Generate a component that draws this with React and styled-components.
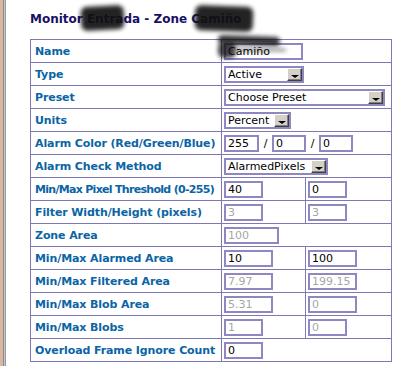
import React from "react";
import styled, { createGlobalStyle } from "styled-components";

const GlobalStyle = createGlobalStyle`
    html, body {
        margin: 0;
        padding: 0;
        background: #ffffff;
    }
    body {
        font-family: "DejaVu Sans", Verdana, sans-serif;
    }
`;

const Page = styled.div`
    display: flex;
    width: 402px;
    height: 366px;
    overflow: hidden;
    position: relative;
`;

const WindowEdge = styled.div`
    width: 7px;
    flex-shrink: 0;
    background: linear-gradient(
        to right,
        #d9b6a2 0px,
        #d9b6a2 3px,
        #8a8a8a 3px,
        #8a8a8a 4px,
        #c8c8c8 4px,
        #c8c8c8 5px,
        #9a9a9a 5px,
        #9a9a9a 6px,
        #ffffff 6px
    );
`;

const Content = styled.div`
    padding-left: 23px;
    padding-top: 11px;
`;

const Title = styled.h2`
    margin: 0;
    font-size: 12px;
    font-weight: bold;
    color: #1a0f66;
    line-height: 16px;
    height: 28px;
`;

const Grid = styled.table`
    border-collapse: collapse;
    width: 361px;
    border: 1px solid #7e78b6;
    table-layout: fixed;
`;

const Row = styled.tr`
    height: 23px;
`;

const Label = styled.td`
    border: 1px solid #7e78b6;
    padding: 0 0 0 4px;
    font-size: 11px;
    font-weight: bold;
    letter-spacing: ${(p) => (p.$squeeze ? "-0.7px" : "-0.1px")};
    color: #0b64a4;
    white-space: nowrap;
    overflow: hidden;
    vertical-align: middle;
`;

const Cell = styled.td`
    border: 1px solid #7e78b6;
    padding: 0 0 0 2px;
    vertical-align: middle;
    font-size: 11px;
    white-space: nowrap;
`;

const Field = styled.input`
    box-sizing: border-box;
    width: ${(p) => p.$w}px;
    height: 17px;
    border: 2px solid #8d88c2;
    padding: 0 0 0 2px;
    margin: 0;
    font-family: "DejaVu Sans", Verdana, sans-serif;
    font-size: 11px;
    color: ${(p) => (p.disabled ? "#a6a6a6" : "#000000")};
    background: #ffffff;
    vertical-align: middle;
    outline: none;
    -webkit-text-fill-color: ${(p) => (p.disabled ? "#a6a6a6" : "#000000")};
    opacity: 1;
`;

const Slash = styled.span`
    display: inline-block;
    width: 13px;
    text-align: center;
    font-size: 11px;
    color: #000000;
    vertical-align: middle;
`;

const SelectBox = styled.div`
    box-sizing: border-box;
    display: inline-flex;
    align-items: center;
    width: ${(p) => p.$w}px;
    height: 17px;
    border: 2px solid #8d88c2;
    background: #ffffff;
    vertical-align: middle;
    font-size: 11px;
    color: #000000;
`;

const SelectText = styled.span`
    flex: 1;
    padding-left: 2px;
    overflow: hidden;
`;

const DropButton = styled.span`
    box-sizing: border-box;
    width: 15px;
    height: 13px;
    background: #d4d0c8;
    border-top: 1px solid #ffffff;
    border-left: 1px solid #ffffff;
    border-right: 1px solid #404040;
    border-bottom: 1px solid #404040;
    box-shadow: inset -1px -1px 0 #808080;
    display: flex;
    align-items: flex-end;
    justify-content: center;
    padding-bottom: 2px;
`;

const Arrow = styled.span`
    width: 0;
    height: 0;
    border-left: 4px solid transparent;
    border-right: 4px solid transparent;
    border-top: 3px solid #000000;
`;

const Scribble = styled.div`
    position: absolute;
    left: ${(p) => p.$x}px;
    top: ${(p) => p.$y}px;
    width: ${(p) => p.$w}px;
    height: ${(p) => p.$h}px;
    background: #111111;
    border-radius: 6px;
    filter: blur(2px);
    opacity: ${(p) => p.$o || 0.92};
    transform: rotate(${(p) => p.$r || 0}deg);
    pointer-events: none;
`;

const Select = ({ w, children }) => (
    <SelectBox $w={w}>
        <SelectText>{children}</SelectText>
        <DropButton>
            <Arrow />
        </DropButton>
    </SelectBox>
);

const rows = [
    { label: "Name", span: [{ v: "Camiño", w: 79 }] },
    { label: "Type", select: { v: "Active", w: 80 } },
    { label: "Preset", select: { v: "Choose Preset", w: 161 } },
    { label: "Units", select: { v: "Percent", w: 67 } },
    { label: "Alarm Color (Red/Green/Blue)", color: true },
    { label: "Alarm Check Method", select: { v: "AlarmedPixels", w: 104 } },
    { label: "Min/Max Pixel Threshold (0-255)", squeeze: true, pair: [{ v: "40", w: 39 }, { v: "0", w: 39 }] },
    { label: "Filter Width/Height (pixels)", pair: [{ v: "3", w: 39, d: true }, { v: "3", w: 39, d: true }] },
    { label: "Zone Area", span: [{ v: "100", w: 55, d: true }] },
    { label: "Min/Max Alarmed Area", pair: [{ v: "10", w: 49 }, { v: "100", w: 49 }] },
    { label: "Min/Max Filtered Area", pair: [{ v: "7.97", w: 49, d: true }, { v: "199.15", w: 49, d: true }] },
    { label: "Min/Max Blob Area", pair: [{ v: "5.31", w: 49, d: true }, { v: "0", w: 49, d: true }] },
    { label: "Min/Max Blobs", pair: [{ v: "1", w: 39, d: true }, { v: "0", w: 39, d: true }] },
    { label: "Overload Frame Ignore Count", span: [{ v: "0", w: 39 }] },
];

const App = () => {
    return (
        <Page>
            <GlobalStyle />
            <WindowEdge />
            <Content>
                <Title>Monitor Entrada - Zone Camiño</Title>
                <Grid>
                    <colgroup>
                        <col style={{ width: "191px" }} />
                        <col style={{ width: "84px" }} />
                        <col style={{ width: "86px" }} />
                    </colgroup>
                    <tbody>
                        {rows.map((row, index) => (
                            <Row key={index}>
                                <Label $squeeze={row.squeeze}>{row.label}</Label>
                                {row.pair ? (
                                    <>
                                        <Cell>
                                            <Field $w={row.pair[0].w} value={row.pair[0].v} disabled={row.pair[0].d} readOnly />
                                        </Cell>
                                        <Cell>
                                            <Field $w={row.pair[1].w} value={row.pair[1].v} disabled={row.pair[1].d} readOnly />
                                        </Cell>
                                    </>
                                ) : (
                                    <Cell colSpan={2}>
                                        {row.select && <Select w={row.select.w}>{row.select.v}</Select>}
                                        {row.span && <Field $w={row.span[0].w} value={row.span[0].v} disabled={row.span[0].d} readOnly />}
                                        {row.color && (
                                            <>
                                                <Field $w={35} value="255" readOnly />
                                                <Slash>/</Slash>
                                                <Field $w={34} value="0" readOnly />
                                                <Slash>/</Slash>
                                                <Field $w={34} value="0" readOnly />
                                            </>
                                        )}
                                    </Cell>
                                )}
                            </Row>
                        ))}
                    </tbody>
                </Grid>
            </Content>
            <Scribble $x={81} $y={6} $w={43} $h={24} $r={-3} />
            <Scribble $x={195} $y={6} $w={58} $h={25} $r={2} />
            <Scribble $x={218} $y={36} $w={62} $h={9} $r={2} $o={0.85} />
            <Scribble $x={218} $y={42} $w={18} $h={16} $o={0.8} />
            <Scribble $x={236} $y={49} $w={50} $h={2} $o={0.7} />
        </Page>
    );
};

export default App;
